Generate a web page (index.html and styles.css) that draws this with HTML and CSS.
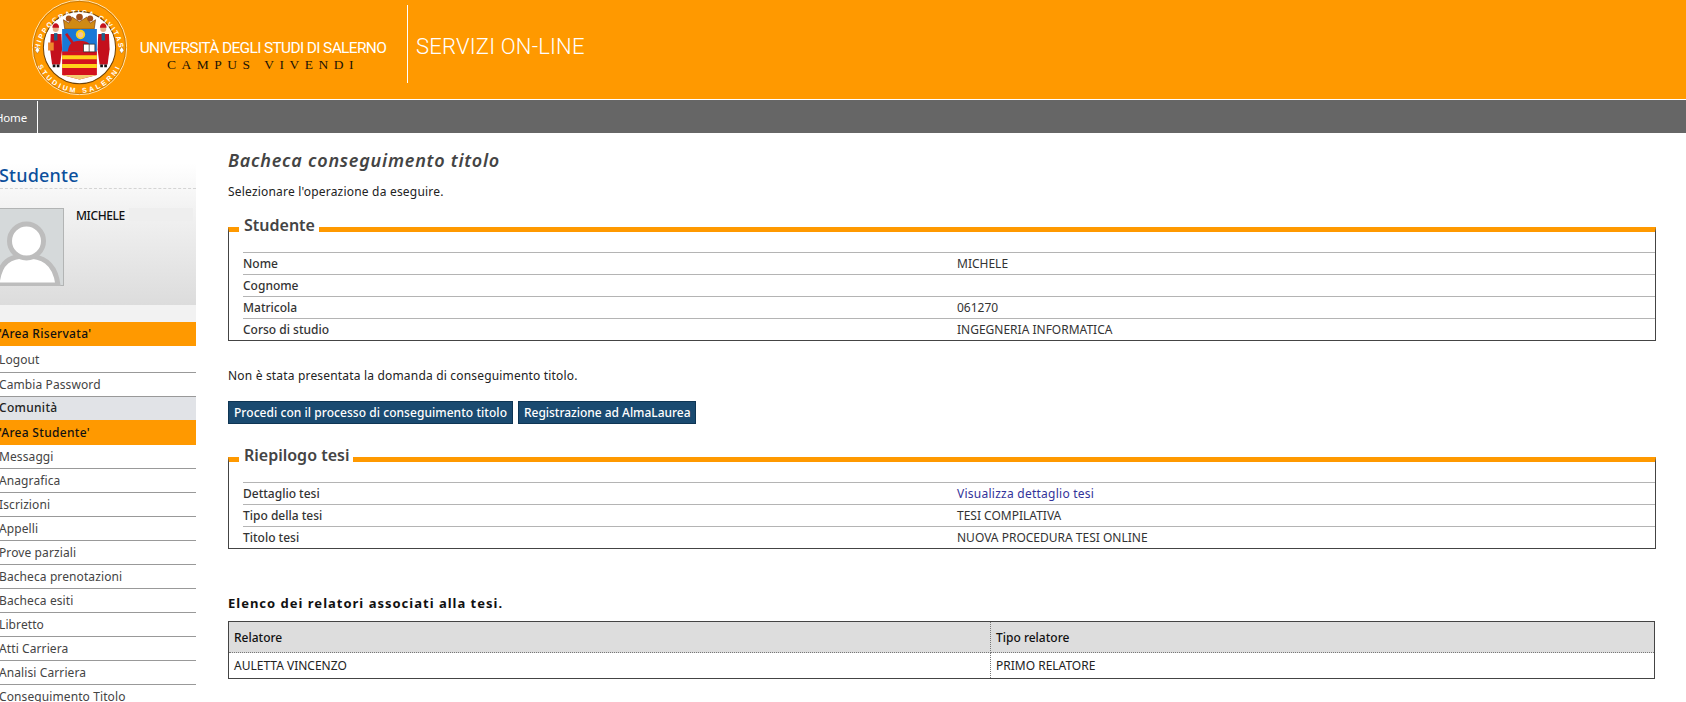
FILE: index.html
```html
<!DOCTYPE html>
<html lang="it">
<head>
<meta charset="utf-8">
<title>Bacheca conseguimento titolo</title>
<link rel="stylesheet" href="styles.css">
</head>
<body>
<header class="top">
  <svg class="seal" viewBox="38 1 284 284" aria-hidden="true">
    <defs>
      <path id="arcTop" d="M 60 165 A 118 118 0 1 1 300 165"/>
      <path id="arcBottom" d="M 44 143 A 136 136 0 0 0 316 143"/>
    </defs>
    <circle cx="180" cy="143" r="141" fill="#f90" stroke="#fff3d8" stroke-width="2.500"/>
    <circle cx="180" cy="143" r="138" fill="none" stroke="#7a4a08" stroke-width="1.200"/>
    <circle cx="180" cy="143" r="108" fill="#fff" stroke="#6e4208" stroke-width="3"/>
    <text class="seal-text seal-text-top"><textPath href="#arcTop" startOffset="50%" text-anchor="middle">HIPPOCRATICA CIVITAS</textPath></text>
    <text class="seal-text seal-text-bottom"><textPath href="#arcBottom" startOffset="50%" text-anchor="middle">STUDIUM SALERNI</textPath></text>
    <path d="M54 141l7 10-7 10-7-10zM306 141l7 10-7 10-7-10z" fill="#fff" stroke="#6e4208" stroke-width="1"/>
    <path d="M136 88l-4-28 16 10 10-18 22 14 22-14 10 18 16-10-4 28z" fill="#d08a14" stroke="#7a3c10" stroke-width="2"/>
    <circle cx="148" cy="56" r="9" fill="#a04c18"/><circle cx="180" cy="52" r="10" fill="#a04c18"/><circle cx="212" cy="56" r="9" fill="#a04c18"/>
    <path d="M128 88h104v70H128z" fill="#1a78d6"/>
    <path d="M128 155h104v70l-52 14-52-14z" fill="#d3121e"/>
    <path d="M128 166h104v12H128zM128 192h104v12H128z" fill="#ffd21a"/>
    <path d="M128 225h104l-52 14z" fill="#f2cf70"/>
    <path d="M145 156c2-22 12-33 36-33s36 11 39 33z" fill="#c8141e"/>
    <circle cx="183" cy="104" r="14" fill="#ffd21a"/>
    <circle cx="183" cy="105" r="8" fill="#f2c49a"/>
    <path d="M140 102l20 28" stroke="#c8141e" stroke-width="8"/>
    <path d="M192 133h34v23h-34z" fill="#fff" stroke="#222" stroke-width="2"/>
    <path d="M209 133v23" stroke="#222" stroke-width="2"/>
    <path d="M94 103h32l2 45-6 46H98l-6-46z" fill="#c4101c"/>
    <path d="M104 100h10v22h-10z" fill="#1f5f8a"/>
    <circle cx="109" cy="88" r="9" fill="#e8b088"/>
    <path d="M99 84c0-18 20-18 20 0z" fill="#c4101c"/>
    <path d="M100 194h8v8h-8zM112 194h8v8h-8z" fill="#111"/>
    <path d="M86 128h17v24H86z" fill="#ee8a2c"/>
    <path d="M236 103h32l2 45-6 46h-24l-6-46z" fill="#c4101c"/>
    <path d="M246 100h10v22h-10z" fill="#1f5f8a"/>
    <circle cx="251" cy="88" r="9" fill="#e8b088"/>
    <path d="M241 84c0-18 20-18 20 0z" fill="#c4101c"/>
    <path d="M242 194h8v8h-8zM254 194h8v8h-8z" fill="#111"/>
  </svg>
  <div class="brand">
    <div class="brand-name">UNIVERSITÀ DEGLI STUDI DI SALERNO</div>
    <div class="brand-motto">CAMPUS VIVENDI</div>
  </div>
  <div class="top-title">SERVIZI ON-LINE</div>
</header>
<nav class="menu"><a class="menu-item" href="#">Home</a></nav>
<div class="page">
  <aside class="side">
    <div class="profile">
      <h2 class="profile-title">Studente</h2>
      <div class="profile-body">
        <svg class="avatar" viewBox="0 0 64 78" aria-hidden="true">
          <rect x="-2" y="0.5" width="65.500" height="77" fill="#d5d9da" stroke="#b2b4b4"/>
          <path d="M-3 77c2-24 14-29 29-29s29 5 32 29z" fill="#fff" stroke="#bdbdbd" stroke-width="5"/>
          <circle cx="26.500" cy="33" r="17" fill="#fff" stroke="#bdbdbd" stroke-width="5"/>
        </svg>
        <div class="profile-name"><span>MICHELE</span><i class="profile-blank"></i></div>
      </div>
    </div>
    <div class="side-gap"></div>
    <div class="side-head">'Area Riservata'</div>
    <a class="side-link side-link-tall" href="#">Logout</a>
    <a class="side-link" href="#">Cambia Password</a>
    <div class="side-sub">Comunità</div>
    <div class="side-head side-head-tall">'Area Studente'</div>
    <a class="side-link" href="#">Messaggi</a>
    <a class="side-link" href="#">Anagrafica</a>
    <a class="side-link" href="#">Iscrizioni</a>
    <a class="side-link" href="#">Appelli</a>
    <a class="side-link" href="#">Prove parziali</a>
    <a class="side-link" href="#">Bacheca prenotazioni</a>
    <a class="side-link" href="#">Bacheca esiti</a>
    <a class="side-link" href="#">Libretto</a>
    <a class="side-link" href="#">Atti Carriera</a>
    <a class="side-link" href="#">Analisi Carriera</a>
    <a class="side-link" href="#">Conseguimento Titolo</a>
  </aside>
  <main class="content">
    <h1 class="title">Bacheca conseguimento titolo</h1>
    <p class="intro">Selezionare l'operazione da eseguire.</p>
    <fieldset class="box">
      <legend class="box-legend">Studente</legend>
      <table class="info">
        <tr><th>Nome</th><td>MICHELE</td></tr>
        <tr><th>Cognome</th><td></td></tr>
        <tr><th>Matricola</th><td>061270</td></tr>
        <tr><th>Corso di studio</th><td>INGEGNERIA INFORMATICA</td></tr>
      </table>
    </fieldset>
    <p class="notice">Non è stata presentata la domanda di conseguimento titolo.</p>
    <div class="actions">
      <button class="btn" type="button">Procedi con il processo di conseguimento titolo</button>
      <button class="btn btn-alt" type="button">Registrazione ad AlmaLaurea</button>
    </div>
    <fieldset class="box box-second">
      <legend class="box-legend">Riepilogo tesi</legend>
      <table class="info">
        <tr><th>Dettaglio tesi</th><td><a class="link" href="#">Visualizza dettaglio tesi</a></td></tr>
        <tr><th>Tipo della tesi</th><td>TESI COMPILATIVA</td></tr>
        <tr><th>Titolo tesi</th><td>NUOVA PROCEDURA TESI ONLINE</td></tr>
      </table>
    </fieldset>
    <p class="list-title">Elenco dei relatori associati alla tesi.</p>
    <table class="grid">
      <thead><tr><th class="col-a">Relatore</th><th>Tipo relatore</th></tr></thead>
      <tbody><tr><td class="col-a">AULETTA VINCENZO</td><td>PRIMO RELATORE</td></tr></tbody>
    </table>
  </main>
</div>
</body>
</html>
```
FILE: styles.css
```css
* { box-sizing: border-box; }
html, body { margin: 0; height: 702px; overflow: hidden; background: #fff; }
body { font-family: "Noto Sans", "DejaVu Sans", sans-serif; font-size: 12px; color: #333; }

.top { display: flex; height: 100px; background: #f90; border-bottom: 1px solid #fff; padding-left: 32px; }
.seal { width: 95px; height: 95px; flex: none; }
.seal-text { font-family: "Liberation Sans", sans-serif; font-size: 21px; font-weight: 700; fill: #fff; }
.seal-text-top { letter-spacing: 5px; }
.seal-text-bottom { letter-spacing: 8px; }
.brand { width: 248px; margin-left: 12px; padding-top: 40px; text-align: center; color: #fff; flex: none; }
.brand-name { font-family: Roboto, sans-serif; font-size: 15.500px; line-height: 17px; white-space: nowrap; letter-spacing: -0.65px; font-weight: 400; }
.brand-motto { font-family: "Liberation Serif", serif; font-size: 13.500px; line-height: 16px; letter-spacing: 5.500px; color: #1a1206; white-space: nowrap; }
.top-title { margin: 5px 0 16px 20px; height: 78px; border-left: 1px solid #fff; padding: 28px 0 0 8px; font-family: Roboto, sans-serif; font-weight: 300; font-size: 22px; line-height: 28px; letter-spacing: 0.2px; color: #fff; white-space: nowrap; }

.menu { display: flex; height: 33px; background: #666; padding-top: 1px; }
.menu-item { display: block; width: 38px; border-right: 1px solid #fff; color: #fff; text-decoration: none; font-size: 11.500px; line-height: 33px; text-indent: -5px; height: 32px; letter-spacing: -0.2px; }

.page { display: flex; }
.side { width: 196px; flex: none; padding-top: 30px; }
.profile { height: 142px; background: linear-gradient(#fff, #f3f3f3 30%, #dcdcdc); }
.profile-title { margin: 0; height: 26px; border-bottom: 1px dashed #d4d4d4; font-size: 18px; line-height: 24px; font-weight: 500; color: #0b4f9c; letter-spacing: 0.2px; text-indent: -1px; }
.profile-body { display: flex; padding-top: 19px; }
.avatar { width: 64px; height: 78px; flex: none; }
.profile-name { display: flex; margin-left: 12px; flex: 1; color: #111; font-weight: 500; line-height: 15px; height: 13px; letter-spacing: -0.4px; }
.profile-blank { display: block; flex: 1; height: 13px; margin: 0 3px 0 4px; background: #eee; }
.side-gap { height: 17px; background: #f2f2f2; }
.side-head { height: 24px; background: #f90; color: #111; line-height: 24px; font-weight: 500; letter-spacing: 0.3px; text-indent: -1px; }
.side-head-tall { height: 25px; line-height: 26px; }
.side-sub { height: 23px; background: #e1e3e7; color: #222; line-height: 22px; font-weight: 500; letter-spacing: 0.3px; text-indent: -1px; }
.side-link { display: block; height: 24px; line-height: 24px; color: #444; text-decoration: none; border-bottom: 1px solid #999; letter-spacing: 0.1px; text-indent: -1px; white-space: nowrap; }
.side-link-tall { height: 27px; line-height: 28px; }

.content { flex: 1; padding: 15px 30px 0 32px; min-width: 0; }
.title { margin: 0; font-size: 18px; line-height: 24px; font-style: italic; font-weight: 600; color: #444; letter-spacing: 0.75px; }
.intro { margin: 12px 0 0; line-height: 16px; color: #222; letter-spacing: 0.2px; }
.box { margin: 19px 0 0; padding: 12px 0 0 14px; border: 1px solid #444; border-top: 5px solid #f90; min-width: 0; }
.box-second { margin-top: 25px; }
.box-legend { margin-left: -4px; padding: 0 4px 0 5px; height: 21px; font-size: 16px; line-height: 12px; font-weight: 600; color: #444; }
.info { width: 100%; border-collapse: separate; border-spacing: 0; table-layout: fixed; }
.info th, .info td { height: 22px; padding: 0; border-top: 1px solid #b4b4b4; text-align: left; vertical-align: middle; line-height: 16px; }
.info th { width: 714px; font-weight: 500; color: #333; }
.notice { margin: 27px 0 0; line-height: 16px; color: #222; letter-spacing: 0.18px; }
.actions { display: flex; gap: 5px; margin-top: 17px; }
.btn { height: 23px; padding: 0 5px; margin: 0; background: #1a4a70; border: 1px solid #0e3554; color: #fff; font: inherit; font-weight: 500; line-height: 20px; letter-spacing: 0.05px; }
.btn-alt { letter-spacing: -0.03px; }
.link { color: #33339a; text-decoration: none; letter-spacing: 0.25px; }
.list-title { margin: 46px 0 0; line-height: 16px; font-size: 13px; font-weight: 700; color: #111; letter-spacing: 1px; }
.grid { width: calc(100% - 1px); margin-top: 10px; border: 1px solid #444; border-collapse: collapse; table-layout: fixed; }
.grid th, .grid td { padding: 0 5px; text-align: left; line-height: 16px; }
.grid th { height: 31px; padding-top: 2px; background: #ddd; color: #111; font-weight: 500; border-bottom: 1px dotted #777; }
.grid td { height: 26px; color: #222; }
.col-a { width: 762px; border-right: 1px dotted #777; }
```
